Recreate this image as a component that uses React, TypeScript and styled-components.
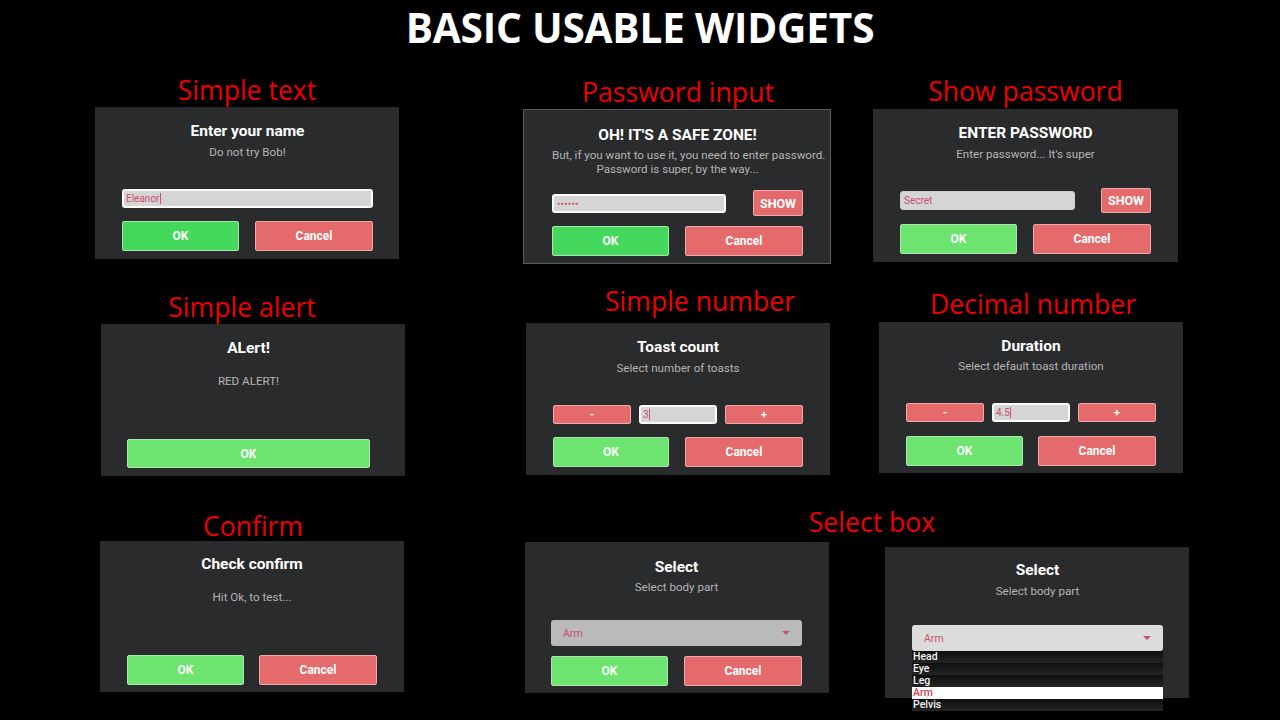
import React from "react";
import styled, { createGlobalStyle, css } from "styled-components";

const GlobalStyle = createGlobalStyle`
  html, body { margin: 0; padding: 0; background: #000; }
  body { font-family: Roboto, "Liberation Sans", sans-serif; }
  * { box-sizing: border-box; }
`;

const Page = styled.div`
  width: 1280px;
  height: 720px;
  overflow: hidden;
  background: #000;
  display: flex;
  flex-direction: column;
`;

const Heading = styled.h1`
  margin: 0;
  height: 56px;
  font-family: "Open Sans", "Noto Sans", sans-serif;
  font-weight: 700;
  font-size: 40.6px;
  line-height: 56px;
  color: #fff;
  text-align: center;
  letter-spacing: -0.2px;
`;

const Row = styled.div<{ $mt: number }>`
  display: flex;
  align-items: flex-start;
  margin-top: ${(p) => p.$mt}px;
`;

const Cell = styled.section<{ $ml: number; $mt: number }>`
  display: flex;
  flex-direction: column;
  margin-left: ${(p) => p.$ml}px;
  margin-top: ${(p) => p.$mt}px;
`;

const Caption = styled.h2<{ $dx?: number; $gap: number }>`
  margin: 0 0 ${(p) => p.$gap}px 0;
  font-family: "Open Sans", "Noto Sans", sans-serif;
  font-weight: 400;
  font-size: 26.6px;
  line-height: 34px;
  height: 30px;
  color: #ee0000;
  text-align: center;
  white-space: nowrap;
  padding-left: ${(p) => Math.max(0, (p.$dx ?? 0) * 2)}px;
  padding-right: ${(p) => Math.max(0, -(p.$dx ?? 0) * 2)}px;
`;

const Panel = styled.div<{
  $w: number;
  $h: number;
  $pt: number;
  $pl: number;
  $pr: number;
  $pb: number;
  $framed?: boolean;
  $mt?: number;
  $ml?: number;
}>`
  width: ${(p) => p.$w}px;
  height: ${(p) => p.$h}px;
  margin-top: ${(p) => p.$mt ?? 0}px;
  margin-left: ${(p) => p.$ml ?? 0}px;
  padding: ${(p) => `${p.$pt}px ${p.$pr}px ${p.$pb}px ${p.$pl}px`};
  background: #2a2b2d;
  display: flex;
  flex-direction: column;
  flex-shrink: 0;
  position: relative;
  ${(p) =>
    p.$framed &&
    css`
      border: 1px solid #5a5b5d;
    `}
`;

const Title = styled.div`
  font-size: 15.5px;
  line-height: 18px;
  font-weight: 700;
  color: #fff;
  text-align: center;
  white-space: nowrap;
`;

const Sub = styled.div<{ $mt: number }>`
  margin-top: ${(p) => p.$mt}px;
  font-size: 11.6px;
  line-height: 14px;
  color: #b4b4b4;
  text-align: center;
  white-space: nowrap;
`;

const FieldRow = styled.div<{ $h: number }>`
  margin-top: auto;
  height: ${(p) => p.$h}px;
  display: flex;
  align-items: center;
  justify-content: space-between;
  position: relative;
`;

const ButtonRow = styled.div<{ $mt?: number; $auto?: boolean }>`
  margin-top: ${(p) => (p.$auto ? "auto" : `${p.$mt ?? 0}px`)};
  display: flex;
  justify-content: space-between;
`;

const TextField = styled.div<{ $w?: number; $framed?: boolean }>`
  width: ${(p) => (p.$w ? `${p.$w}px` : "100%")};
  height: 19px;
  background: #d5d5d5;
  border-radius: 3px;
  border: ${(p) => (p.$framed ? "2px solid #fbfbfb" : "1px solid #d0d0d0")};
  display: flex;
  align-items: center;
  padding-left: ${(p) => (p.$framed ? 2 : 3)}px;
  font-size: 10px;
  color: #c9506a;
  white-space: nowrap;
`;

const Dots = styled.span`
  font-size: 5px;
  letter-spacing: 0.6px;
  color: #c9506a;
  padding-left: 1px;
`;

const Caret = styled.span`
  display: inline-block;
  width: 1px;
  height: 11px;
  background: #c9506a;
  margin-left: 0.5px;
`;

type Variant = "ok" | "okBright" | "cancel";

const ActionButton = styled.button<{ $variant: Variant; $w: number; $h?: number }>`
  width: ${(p) => p.$w}px;
  height: ${(p) => p.$h ?? 30}px;
  border-radius: 2px;
  border: 1px solid
    ${(p) => (p.$variant === "cancel" ? "#f0a9a9" : "#a9e6b0")};
  background: ${(p) =>
    p.$variant === "ok" ? "#44d85c" : p.$variant === "okBright" ? "#6ce46f" : "#e56a6b"};
  color: #fff;
  font-family: Roboto, "Liberation Sans", sans-serif;
  font-weight: 700;
  font-size: 12px;
  padding: 0;
  cursor: pointer;
`;

const ShowButton = styled.button<{ $h: number }>`
  width: 50px;
  height: ${(p) => p.$h}px;
  border-radius: 2px;
  border: 1px solid #f0a9a9;
  background: #e56a6b;
  color: #fff;
  font-family: Roboto, "Liberation Sans", sans-serif;
  font-weight: 700;
  font-size: 12.5px;
  padding: 0;
`;

const StepButton = styled.button`
  width: 78px;
  height: 19px;
  border-radius: 2px;
  border: 1px solid #f0a9a9;
  background: #e56a6b;
  color: #fff;
  font-family: Roboto, "Liberation Sans", sans-serif;
  font-weight: 700;
  font-size: 11.5px;
  line-height: 1;
  padding: 0;
`;

const SelectBox = styled.div<{ $open?: boolean }>`
  width: 100%;
  height: 26px;
  border-radius: 3px;
  background: ${(p) => (p.$open ? "#dcdcdc" : "#bababa")};
  display: flex;
  align-items: center;
  justify-content: space-between;
  padding: 0 12px 0 12px;
  font-size: 10.5px;
  color: #c9506a;
`;

const Triangle = styled.span`
  width: 0;
  height: 0;
  border-left: 4px solid transparent;
  border-right: 4px solid transparent;
  border-top: 4px solid #c9506a;
`;

const Dropdown = styled.ul`
  position: absolute;
  top: 100%;
  left: 0;
  width: 100%;
  margin: 0;
  padding: 0;
  list-style: none;
  z-index: 2;
`;

const Option = styled.li<{ $selected?: boolean }>`
  height: 12px;
  line-height: 12px;
  font-size: 10.5px;
  font-weight: 500;
  padding-left: 1px;
  color: ${(p) => (p.$selected ? "#e0405a" : "#f2f2f2")};
  background: ${(p) => (p.$selected ? "#ffffff" : "linear-gradient(#0f0f0f, #242424)")};
`;

const Stepper = styled.div`
  margin-top: auto;
  display: flex;
  gap: 8px;
`;

const Group = styled.div`
  display: flex;
  align-items: flex-start;
`;

const OkCancel: React.FC<{ ok: Variant; okW?: number; cancelW?: number; mt?: number; auto?: boolean }> = ({
  ok,
  okW = 117,
  cancelW = 118,
  mt,
  auto,
}) => (
  <ButtonRow $mt={mt} $auto={auto}>
    <ActionButton $variant={ok} $w={okW}>
      OK
    </ActionButton>
    <ActionButton $variant="cancel" $w={cancelW}>
      Cancel
    </ActionButton>
  </ButtonRow>
);

export default function App() {
  return (
    <Page>
      <GlobalStyle />
      <Heading>BASIC USABLE WIDGETS</Heading>

      <Row $mt={17}>
        <Cell $ml={95} $mt={0}>
          <Caption $gap={4}>Simple text</Caption>
          <Panel $w={304} $h={152} $pt={15} $pl={27} $pr={26} $pb={8}>
            <Title>Enter your name</Title>
            <Sub $mt={5}>Do not try Bob!</Sub>
            <FieldRow $h={19}>
              <TextField $framed>
                Eleanor
                <Caret />
              </TextField>
            </FieldRow>
            <OkCancel ok="ok" mt={13} />
          </Panel>
        </Cell>

        <Cell $ml={124} $mt={2}>
          <Caption $gap={4} $dx={1}>Password input</Caption>
          <Panel $w={308} $h={155} $pt={16} $pl={28} $pr={27} $pb={7} $framed>
            <Title>OH! IT'S A SAFE ZONE!</Title>
            <Sub $mt={4}>
              But, if you want to use it, you need to enter password.
              <br />
              Password is super, by the way...
            </Sub>
            <FieldRow $h={26}>
              <TextField $w={174} $framed>
                <Dots>●●●●●●</Dots>
              </TextField>
              <ShowButton $h={26}>SHOW</ShowButton>
            </FieldRow>
            <OkCancel ok="ok" mt={10} />
          </Panel>
        </Cell>

        <Cell $ml={42} $mt={1}>
          <Caption $gap={5}>Show password</Caption>
          <Panel $w={305} $h={153} $pt={15} $pl={27} $pr={27} $pb={8}>
            <Title>ENTER PASSWORD</Title>
            <Sub $mt={5}>Enter password... It's super</Sub>
            <FieldRow $h={25}>
              <TextField $w={175}>Secret</TextField>
              <ShowButton $h={25}>SHOW</ShowButton>
            </FieldRow>
            <OkCancel ok="okBright" mt={11} />
          </Panel>
        </Cell>
      </Row>

      <Row $mt={20}>
        <Cell $ml={101} $mt={6}>
          <Caption $gap={4} $dx={-11}>Simple alert</Caption>
          <Panel $w={304} $h={152} $pt={15} $pl={26} $pr={35} $pb={8}>
            <Title>ALert!</Title>
            <Sub $mt={17}>RED ALERT!</Sub>
            <ButtonRow $auto>
              <ActionButton $variant="okBright" $w={243} $h={29}>
                OK
              </ActionButton>
            </ButtonRow>
          </Panel>
        </Cell>

        <Cell $ml={121} $mt={0}>
          <Caption $gap={9} $dx={22}>Simple number</Caption>
          <Panel $w={304} $h={152} $pt={15} $pl={27} $pr={27} $pb={8}>
            <Title>Toast count</Title>
            <Sub $mt={5}>Select number of toasts</Sub>
            <Stepper>
              <StepButton>-</StepButton>
              <TextField $w={78} $framed>
                3
                <Caret />
              </TextField>
              <StepButton>+</StepButton>
            </Stepper>
            <OkCancel ok="okBright" okW={116} mt={13} />
          </Panel>
        </Cell>

        <Cell $ml={49} $mt={3}>
          <Caption $gap={5} $dx={2}>Decimal number</Caption>
          <Panel $w={304} $h={151} $pt={15} $pl={27} $pr={27} $pb={7}>
            <Title>Duration</Title>
            <Sub $mt={4}>Select default toast duration</Sub>
            <Stepper>
              <StepButton>-</StepButton>
              <TextField $w={78} $framed>
                4.5
                <Caret />
              </TextField>
              <StepButton>+</StepButton>
            </Stepper>
            <OkCancel ok="okBright" mt={14} />
          </Panel>
        </Cell>
      </Row>

      <Row $mt={29}>
        <Cell $ml={100} $mt={4}>
          <Caption $gap={2} $dx={1}>Confirm</Caption>
          <Panel $w={304} $h={151} $pt={14} $pl={27} $pr={27} $pb={7}>
            <Title>Check confirm</Title>
            <Sub $mt={17}>Hit Ok, to test...</Sub>
            <ButtonRow $auto>
              <ActionButton $variant="okBright" $w={117}>
                OK
              </ActionButton>
              <ActionButton $variant="cancel" $w={118}>
                Cancel
              </ActionButton>
            </ButtonRow>
          </Panel>
        </Cell>

        <Cell $ml={121} $mt={0}>
          <Caption $gap={7} $dx={15}>Select box</Caption>
          <Group>
            <Panel $w={304} $h={151} $pt={16} $pl={26} $pr={27} $pb={7}>
              <Title>Select</Title>
              <Sub $mt={4}>Select body part</Sub>
              <FieldRow $h={26}>
                <SelectBox>
                  Arm
                  <Triangle />
                </SelectBox>
              </FieldRow>
              <OkCancel ok="okBright" mt={10} />
            </Panel>
            <Panel $w={304} $h={151} $pt={14} $pl={27} $pr={26} $pb={7} $mt={5} $ml={56}>
              <Title>Select</Title>
              <Sub $mt={5}>Select body part</Sub>
              <FieldRow $h={26}>
                <SelectBox $open>
                  Arm
                  <Triangle />
                </SelectBox>
                <Dropdown>
                  <Option>Head</Option>
                  <Option>Eye</Option>
                  <Option>Leg</Option>
                  <Option $selected>Arm</Option>
                  <Option>Pelvis</Option>
                </Dropdown>
              </FieldRow>
              <OkCancel ok="okBright" mt={10} />
            </Panel>
          </Group>
        </Cell>
      </Row>
    </Page>
  );
}
